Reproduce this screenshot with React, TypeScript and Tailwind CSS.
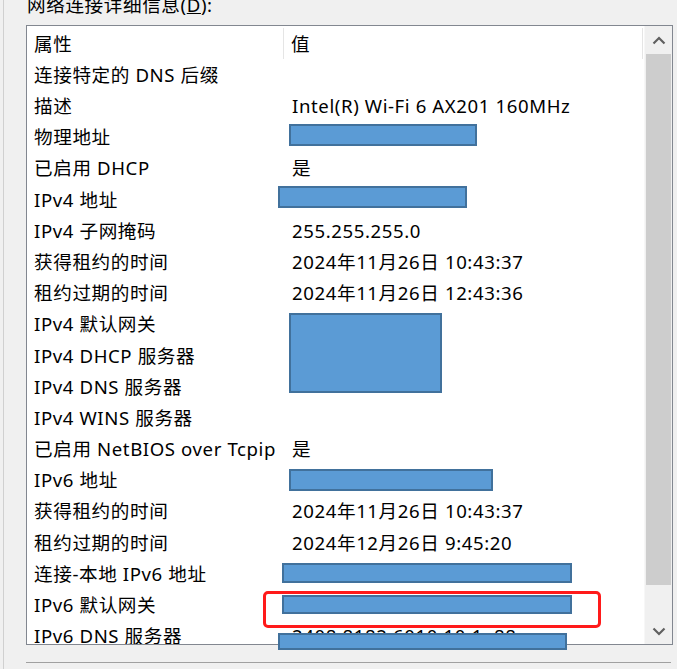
import React from "react";

const rows: [string, string][] = [
  ["连接特定的 DNS 后缀", ""],
  ["描述", "Intel(R) Wi-Fi 6 AX201 160MHz"],
  ["物理地址", ""],
  ["已启用 DHCP", "是"],
  ["IPv4 地址", ""],
  ["IPv4 子网掩码", "255.255.255.0"],
  ["获得租约的时间", "2024年11月26日 10:43:37"],
  ["租约过期的时间", "2024年11月26日 12:43:36"],
  ["IPv4 默认网关", ""],
  ["IPv4 DHCP 服务器", ""],
  ["IPv4 DNS 服务器", ""],
  ["IPv4 WINS 服务器", ""],
  ["已启用 NetBIOS over Tcpip", "是"],
  ["IPv6 地址", ""],
  ["获得租约的时间", "2024年11月26日 10:43:37"],
  ["租约过期的时间", "2024年12月26日 9:45:20"],
  ["连接-本地 IPv6 地址", ""],
  ["IPv6 默认网关", ""],
  ["IPv6 DNS 服务器", "2408:8182:6010:10:1::88"],
];

const boxes = [
  { x: 289, y: 124, w: 188, h: 22 },
  { x: 278, y: 186, w: 189, h: 22 },
  { x: 289, y: 313, w: 153, h: 80 },
  { x: 289, y: 469, w: 204, h: 22 },
  { x: 282, y: 563, w: 290, h: 20 },
  { x: 282, y: 595, w: 290, h: 19 },
  { x: 278, y: 633, w: 289, h: 17 },
];

export default function App() {
  return (
    <div
      className="relative w-[677px] h-[669px] overflow-hidden bg-[#f0f0f0] text-black text-[18.6px] tracking-[0.6px]"
      style={{ fontFamily: '"Noto Sans", "Noto Sans CJK SC", sans-serif' }}
    >
      <div className="absolute left-[3px] top-0 h-full w-px bg-[#d0d0d0]" />
      <div className="pl-[26px] pr-[4px] flex flex-col">
        <div className="h-[25px] flex items-start">
          <div className="leading-[25px] -mt-[8px] pl-px whitespace-nowrap">
            网络连接详细信息(<span className="underline">D</span>):
          </div>
        </div>
        <div className="relative z-0 h-[620px] w-[647px] border border-[#828790] bg-white flex">
          <div className="w-[617px] overflow-hidden pt-[2px]">
            <div className="flex h-[31.2px] items-center">
              <div className="w-[257px] h-full flex items-center pl-[7px] border-r border-[#e5e5e5]">属性</div>
              <div className="w-[359px] h-full flex items-center pl-[7px] border-r border-[#e5e5e5]">值</div>
            </div>
            {rows.map(([k, v], i) => (
              <div key={i} className="flex h-[31.2px] items-center whitespace-nowrap">
                <div className="w-[258px] pl-[7px]">{k}</div>
                <div className="pl-[7px]">{v}</div>
              </div>
            ))}
          </div>
          <div className="w-[28px] bg-[#f0f0f0] flex flex-col border-l border-[#f7f7f7]">
            <div className="h-[28px] flex items-center justify-center">
              <svg width="14" height="9" viewBox="0 0 14 9">
                <path d="M1.5 7.5 L7 2 L12.5 7.5" fill="none" stroke="#606060" strokeWidth="2.2" />
              </svg>
            </div>
            <div className="h-[531px] mx-[1px] bg-[#cdcdcd]" />
            <div className="flex-1 flex items-end justify-center pb-[8px]">
              <svg width="14" height="9" viewBox="0 0 14 9">
                <path d="M1.5 1.5 L7 7 L12.5 1.5" fill="none" stroke="#606060" strokeWidth="2.2" />
              </svg>
            </div>
          </div>
        </div>
        <div className="mt-[17px] h-px w-[645px] bg-[#a0a0a0]" />
      </div>
      {boxes.map((b, i) => (
        <div
          key={i}
          className="absolute bg-[#5b9bd5] border-2 border-[#41719c]"
          style={{ left: b.x, top: b.y, width: b.w, height: b.h }}
        />
      ))}
      <div className="absolute left-[263px] top-[591px] w-[338px] h-[37px] border-[3.5px] border-[#ff1a1a] rounded-[5px]" />
    </div>
  );
}
